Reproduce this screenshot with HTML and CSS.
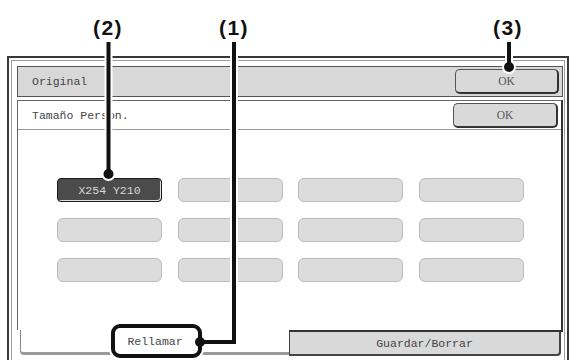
FILE: index.html
```html
<!DOCTYPE html>
<html lang="es">
<head>
<meta charset="utf-8">
<title>Tamaño Person.</title>
<link rel="stylesheet" href="styles.css">
</head>
<body>
<div class="screen">
  <div class="frame">
    <div class="frame-inner">
      <div class="header">
        <span class="label">Original</span>
        <div class="ok">OK</div>
      </div>
      <div class="panel">
        <div class="panel-head">
          <span class="label">Tamaño Person.</span>
          <div class="ok ok-wide">OK</div>
        </div>
        <div class="grid">
          <div class="key key-active">X254 Y210</div>
          <div class="key"></div>
          <div class="key"></div>
          <div class="key"></div>
          <div class="key"></div>
          <div class="key"></div>
          <div class="key"></div>
          <div class="key"></div>
          <div class="key"></div>
          <div class="key"></div>
          <div class="key"></div>
          <div class="key"></div>
        </div>
      </div>
      <div class="tabs">
        <div class="tab tab-active">Rellamar</div>
        <div class="tab-slot">
          <div class="tab tab-idle">Guardar/Borrar</div>
        </div>
      </div>
    </div>
  </div>
  <svg class="callouts" width="570" height="360" viewBox="0 0 570 360">
    <g class="halo">
      <path d="M108.5 42 V174"/>
      <circle cx="108.5" cy="174" r="5"/>
      <path d="M234 42 V342 H200"/>
      <circle cx="200" cy="342" r="5"/>
      <rect x="113" y="326" width="87" height="30" rx="7"/>
      <path d="M509 42 V67"/>
      <circle cx="509" cy="67" r="5"/>
    </g>
    <g class="ink">
      <path d="M108.5 42 V174"/>
      <path d="M234 42 V342 H200"/>
      <rect x="113" y="326" width="87" height="30" rx="7"/>
      <path d="M509 42 V67"/>
    </g>
    <g class="dots">
      <circle cx="108.5" cy="174" r="5"/>
      <circle cx="200" cy="342" r="5"/>
      <circle cx="509" cy="67" r="5"/>
    </g>
    <text class="tag" x="108" y="35">(2)</text>
    <text class="tag" x="234" y="35">(1)</text>
    <text class="tag" x="508" y="35">(3)</text>
  </svg>
</div>
</body>
</html>
```

FILE: styles.css
```css
* {
  box-sizing: border-box;
}

html,
body {
  margin: 0;
  padding: 0;
  width: 570px;
  height: 360px;
  overflow: hidden;
  background: #ffffff;
}

.screen {
  position: relative;
  width: 570px;
  height: 360px;
  padding-top: 56px;
}

.frame {
  margin-left: 7px;
  width: 562px;
  height: 304px;
  border: 2px solid #383838;
  border-bottom: 0;
  padding: 2px 2px 0 2px;
}

.frame-inner {
  height: 100%;
  border: 1px solid #a0a0a0;
  border-bottom: 0;
  padding: 5px 1px 0 5px;
}

.label {
  font-family: "Liberation Mono", monospace;
  font-size: 11.5px;
  color: #444444;
}

.header {
  height: 31px;
  display: flex;
  align-items: center;
  justify-content: space-between;
  background: #d8d8d8;
  border: 1px solid #555555;
  padding: 0 3px 0 14px;
}

.ok {
  width: 104px;
  height: 25px;
  display: flex;
  align-items: center;
  justify-content: center;
  background: #d9d9d9;
  border: 1px solid #555555;
  border-right: 2px solid #333333;
  border-bottom: 2px solid #333333;
  border-radius: 5px;
  font-family: "Liberation Serif", serif;
  font-size: 11.5px;
  color: #555555;
}

.ok-wide {
  width: 105px;
}

.panel {
  margin-top: 3px;
  height: 230px;
  border-top: 1px solid #666666;
  border-left: 1px solid #666666;
  border-right: 2px solid #333333;
}

.panel-head {
  height: 29px;
  display: flex;
  align-items: center;
  justify-content: space-between;
  border-bottom: 1px solid #9a9a9a;
  padding: 0 3px 0 14px;
}

.grid {
  display: grid;
  grid-template-columns: repeat(4, 105px);
  grid-auto-rows: 24px;
  column-gap: 15.67px;
  row-gap: 16px;
  margin: 48px 0 0 39px;
}

.key {
  background: #dcdcdd;
  border: 1px solid #bcbcbc;
  border-radius: 6px;
}

.key-active {
  display: flex;
  align-items: center;
  justify-content: center;
  background: #4b4b4b;
  border: 1.5px solid #1a1a1a;
  border-radius: 4px;
  box-shadow: inset -1px -1px 0 #e0e0e0;
  font-family: "Liberation Mono", monospace;
  font-size: 11.5px;
  color: #d8d8d8;
}

.tabs {
  display: flex;
  height: 26px;
  width: 543px;
  margin-left: 3px;
}

.tab {
  display: flex;
  align-items: center;
  justify-content: center;
  font-family: "Liberation Mono", monospace;
  font-size: 11.5px;
  color: #444444;
}

.tab-active {
  width: 269px;
  height: 25px;
  background: #ffffff;
  border-left: 1px solid #888888;
  border-bottom: 3px solid #9a9a9a;
  border-bottom-left-radius: 4px;
}

.tab-slot {
  flex: 1;
  border-top: 2px solid #333333;
}

.tab-idle {
  height: 24px;
  margin-right: 2px;
  background: #d9d9d9;
  border-left: 1px solid #444444;
  border-right: 2px solid #444444;
  border-bottom: 2px solid #444444;
  border-bottom-right-radius: 4px;
}

.callouts {
  position: absolute;
  left: 0;
  top: 0;
  pointer-events: none;
}

.halo path,
.halo rect {
  fill: none;
  stroke: #ffffff;
  stroke-width: 8;
}

.halo circle {
  fill: #ffffff;
  stroke: #ffffff;
  stroke-width: 4;
}

.ink path,
.ink rect {
  fill: none;
  stroke: #111111;
  stroke-width: 4;
}

.dots circle {
  fill: #111111;
}

.tag {
  font-family: "Liberation Sans", Arial, sans-serif;
  font-weight: bold;
  font-size: 21px;
  letter-spacing: 1.5px;
  text-anchor: middle;
  fill: #111111;
}
```
